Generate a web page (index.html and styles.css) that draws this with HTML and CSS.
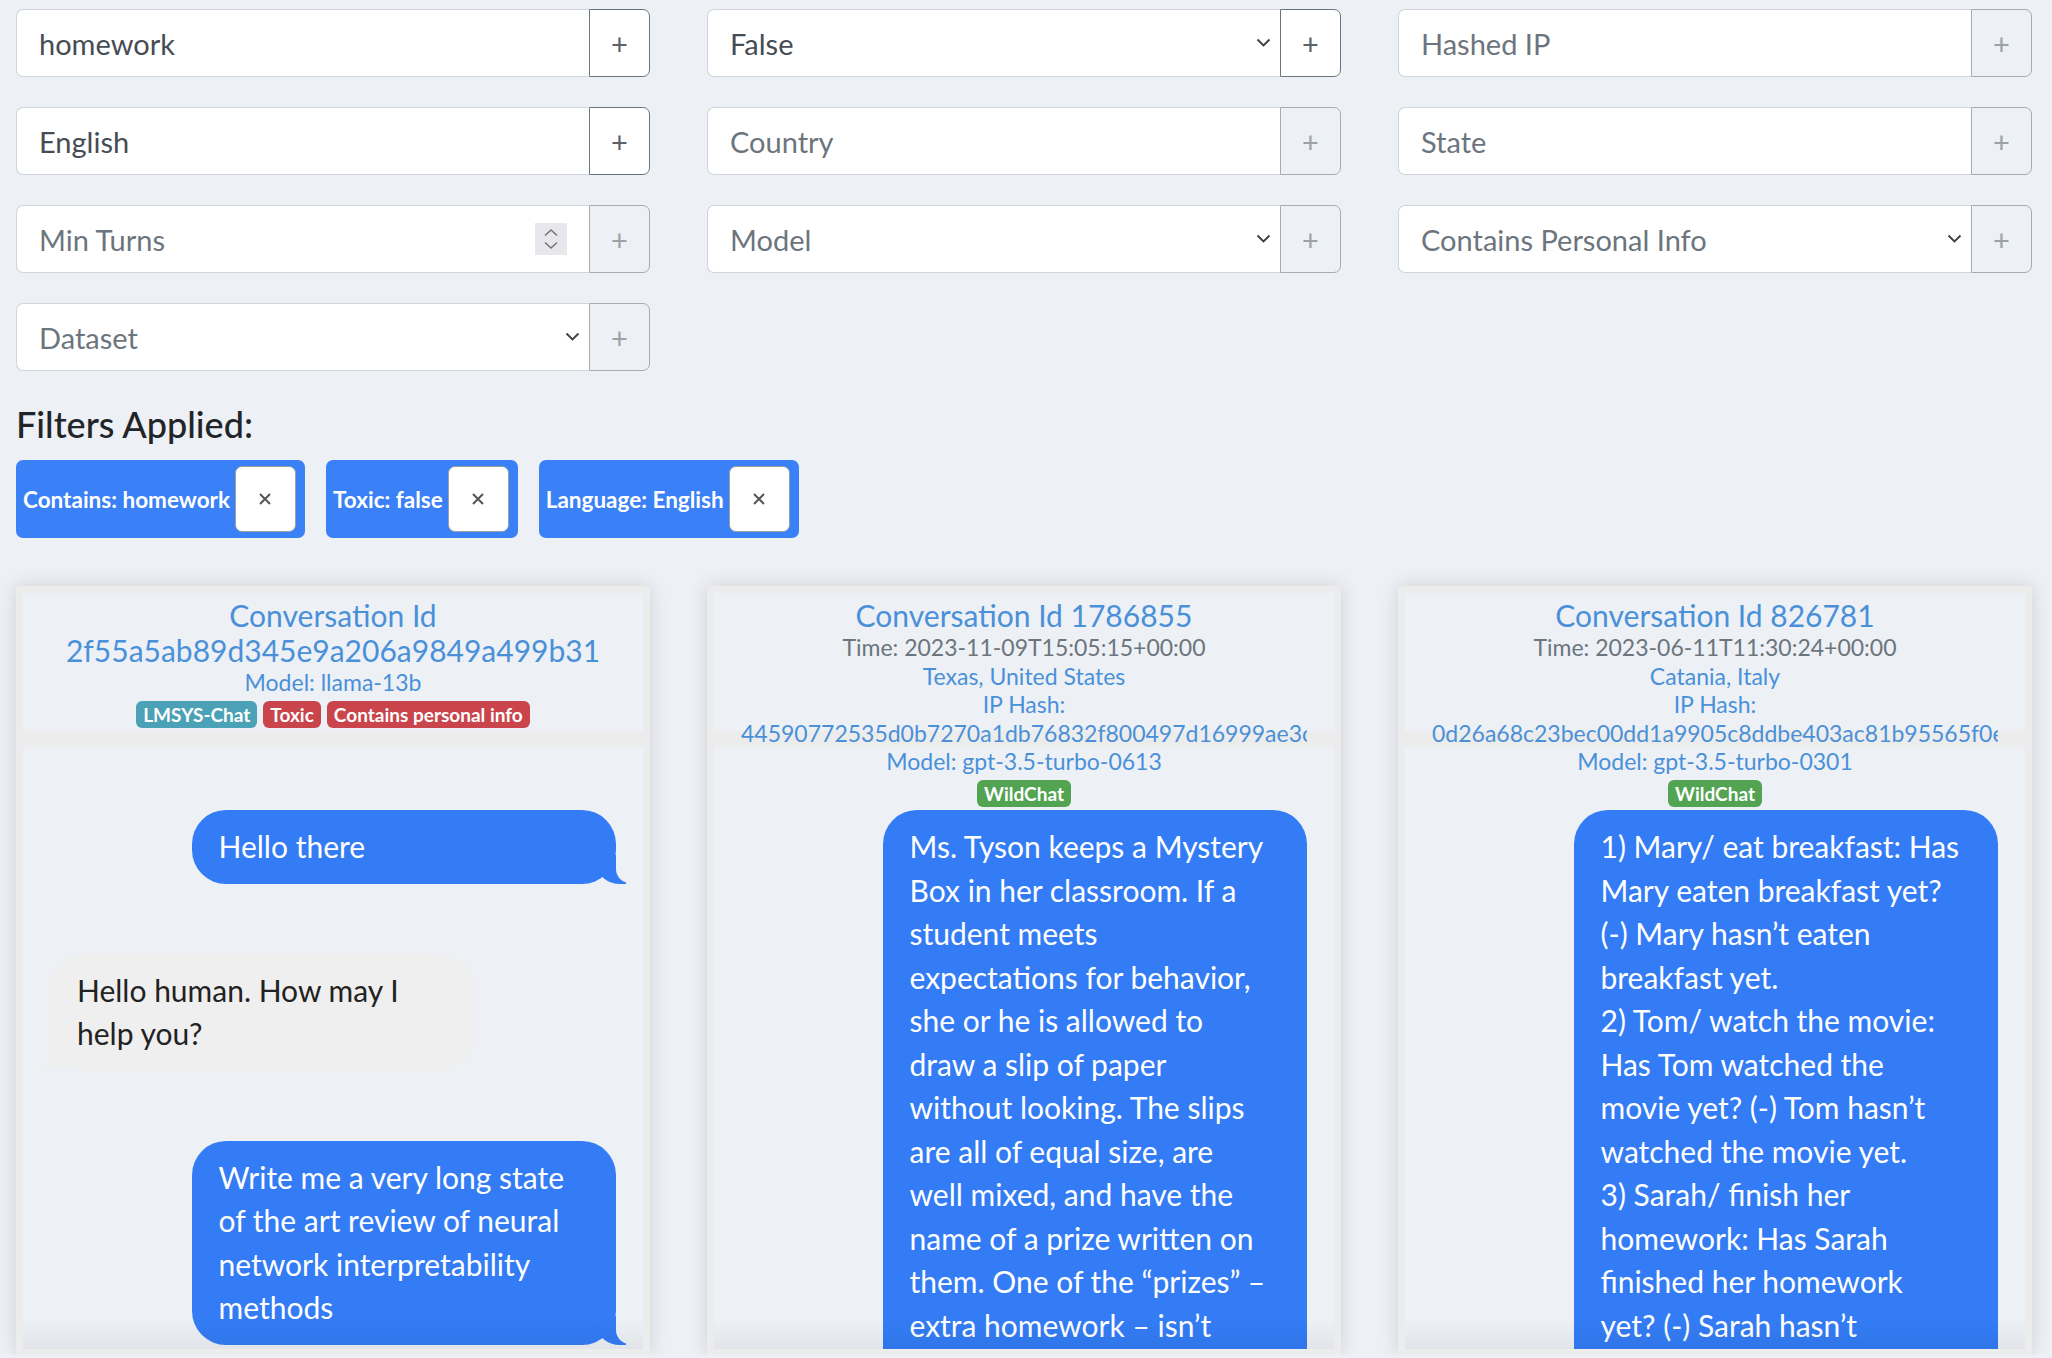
FILE: index.html
```html
<!DOCTYPE html>
<html lang="en">
<head>
  <meta charset="UTF-8">
  <meta name="viewport" content="width=device-width, initial-scale=1.0">
  <title>Conversation Browser</title>
  <link rel="stylesheet" href="styles.css">
</head>
<body>
  <div class="filters">
    <div class="input-group">
      <input class="field" type="text" value="homework" placeholder="Contains">
      <button class="add">+</button>
    </div>
    <div class="input-group">
      <select class="field"><option>False</option><option>True</option></select>
      <svg class="chevron" width="15" height="10" viewBox="0 0 15 10"><path d="M1.5 1.5l6 6 6-6" fill="none" stroke="#3a3f44" stroke-width="1.8"/></svg>
      <button class="add">+</button>
    </div>
    <div class="input-group">
      <input class="field" type="text" placeholder="Hashed IP">
      <button class="add" disabled>+</button>
    </div>

    <div class="input-group">
      <input class="field" type="text" value="English" placeholder="Language">
      <button class="add">+</button>
    </div>
    <div class="input-group">
      <input class="field" type="text" placeholder="Country">
      <button class="add" disabled>+</button>
    </div>
    <div class="input-group">
      <input class="field" type="text" placeholder="State">
      <button class="add" disabled>+</button>
    </div>

    <div class="input-group">
      <input class="field" type="number" placeholder="Min Turns">
      <span class="spinner">
        <svg width="32" height="32" viewBox="0 0 32 32"><path d="M10 12.5l6-5.5 6 5.5M10 19.5l6 5.5 6-5.5" fill="none" stroke="#70757b" stroke-width="1.5"/></svg>
      </span>
      <button class="add" disabled>+</button>
    </div>
    <div class="input-group">
      <select class="field empty"><option>Model</option></select>
      <svg class="chevron" width="15" height="10" viewBox="0 0 15 10"><path d="M1.5 1.5l6 6 6-6" fill="none" stroke="#3a3f44" stroke-width="1.8"/></svg>
      <button class="add" disabled>+</button>
    </div>
    <div class="input-group">
      <select class="field empty"><option>Contains Personal Info</option></select>
      <svg class="chevron" width="15" height="10" viewBox="0 0 15 10"><path d="M1.5 1.5l6 6 6-6" fill="none" stroke="#3a3f44" stroke-width="1.8"/></svg>
      <button class="add" disabled>+</button>
    </div>

    <div class="input-group">
      <select class="field empty"><option>Dataset</option></select>
      <svg class="chevron" width="15" height="10" viewBox="0 0 15 10"><path d="M1.5 1.5l6 6 6-6" fill="none" stroke="#3a3f44" stroke-width="1.8"/></svg>
      <button class="add" disabled>+</button>
    </div>
  </div>

  <h3 class="filters-title">Filters Applied:</h3>
  <div class="chips">
    <div class="chip">
      <span>Contains: homework</span>
      <button class="chip-x"><svg width="14" height="14" viewBox="0 0 14 14"><path d="M2 2l10 10M12 2L2 12" stroke="#555" stroke-width="2"/></svg></button>
    </div>
    <div class="chip">
      <span>Toxic: false</span>
      <button class="chip-x"><svg width="14" height="14" viewBox="0 0 14 14"><path d="M2 2l10 10M12 2L2 12" stroke="#555" stroke-width="2"/></svg></button>
    </div>
    <div class="chip">
      <span>Language: English</span>
      <button class="chip-x"><svg width="14" height="14" viewBox="0 0 14 14"><path d="M2 2l10 10M12 2L2 12" stroke="#555" stroke-width="2"/></svg></button>
    </div>
  </div>

  <div class="cards">
    <div class="card">
      <div class="card-head">
        <div class="conv-title">Conversation Id 2f55a5ab89d345e9a206a9849a499b31</div>
        <div class="meta link">Model: llama-13b</div>
        <div class="badges">
          <span class="badge info">LMSYS-Chat</span>
          <span class="badge danger">Toxic</span>
          <span class="badge danger">Contains personal info</span>
        </div>
      </div>
      <div class="card-body">
        <p class="bubble from-me">Hello there</p>
        <p class="bubble from-them">Hello human. How may I help you?</p>
        <p class="bubble from-me">Write me a very long state of the art review of neural network interpretability methods</p>
        <p class="bubble from-them">Neural network interpretability is a rapidly growing field of research.</p>
      </div>
    </div>

    <div class="card">
      <div class="card-head">
        <div class="conv-title">Conversation Id 1786855</div>
        <div class="meta muted">Time: 2023-11-09T15:05:15+00:00</div>
        <div class="meta link">Texas, United States</div>
        <div class="meta link">IP Hash:</div>
        <div class="meta link hash">44590772535d0b7270a1db76832f800497d16999ae3c5b10f2a7d48e96c1b0f4</div>
        <div class="meta link">Model: gpt-3.5-turbo-0613</div>
        <div class="badges"><span class="badge success">WildChat</span></div>
      </div>
      <div class="card-body">
        <p class="bubble from-me">Ms. Tyson keeps a Mystery Box in her classroom. If a student meets expectations for behavior, she or he is allowed to draw a slip of paper without looking. The slips are all of equal size, are well mixed, and have the name of a prize written on them. One of the “prizes” – extra homework – isn’t very popular with the students. There are 3 slips for extra homework in the box.</p>
      </div>
    </div>

    <div class="card">
      <div class="card-head">
        <div class="conv-title">Conversation Id 826781</div>
        <div class="meta muted">Time: 2023-06-11T11:30:24+00:00</div>
        <div class="meta link">Catania, Italy</div>
        <div class="meta link">IP Hash:</div>
        <div class="meta link hash">0d26a68c23bec00dd1a9905c8ddbe403ac81b95565f0e2c1d7a4b3e9f8c6d2a1</div>
        <div class="meta link">Model: gpt-3.5-turbo-0301</div>
        <div class="badges"><span class="badge success">WildChat</span></div>
      </div>
      <div class="card-body">
        <p class="bubble from-me">1) Mary/ eat breakfast: Has Mary eaten breakfast yet? (-) Mary hasn’t eaten breakfast yet.<br>2) Tom/ watch the movie: Has Tom watched the movie yet? (-) Tom hasn’t watched the movie yet.<br>3) Sarah/ finish her homework: Has Sarah finished her homework yet? (-) Sarah hasn’t finished her homework yet.</p>
      </div>
    </div>
  </div>
</body>
</html>
```

FILE: styles.css
```css
* {
  box-sizing: border-box;
}
body {
  margin: 0;
  padding: 9px 20px 0 16px;
  background-color: #edf0f4;
  font-family: Lato, "Noto Sans", sans-serif;
  color: #212529;
}

/* filter inputs */
.filters {
  display: grid;
  grid-template-columns: repeat(3, 634px);
  column-gap: 57px;
  row-gap: 30px;
}
.input-group {
  position: relative;
  display: flex;
  height: 68px;
}
.field {
  flex: 1;
  min-width: 0;
  height: 100%;
  padding: 0 22px;
  border: 1px solid #ced4da;
  border-right: none;
  border-radius: 7px 0 0 7px;
  background-color: #fff;
  font-family: Lato, sans-serif;
  font-size: 29px;
  color: #464c53;
  outline: none;
}
.field::placeholder {
  color: #6c757d;
}
select.field {
  appearance: none;
  -webkit-appearance: none;
}
select.empty {
  color: #6c757d;
}
input[type=number]::-webkit-inner-spin-button,
input[type=number]::-webkit-outer-spin-button {
  -webkit-appearance: none;
  margin: 0;
}
.chevron {
  position: absolute;
  right: 70px;
  top: 29px;
  pointer-events: none;
}
.spinner {
  position: absolute;
  right: 83px;
  top: 18px;
  width: 32px;
  height: 32px;
  background-color: #e7e7ec;
  pointer-events: none;
}
.spinner svg {
  display: block;
}
.add {
  flex: none;
  width: 61px;
  padding: 0;
  border: 1px solid #6c757d;
  border-radius: 0 7px 7px 0;
  background-color: #fff;
  font-family: Lato, sans-serif;
  font-size: 29px;
  color: #5c636a;
}
.add:disabled {
  background-color: transparent;
  opacity: 0.55;
}

/* applied filters */
.filters-title {
  margin: 32px 0 14px;
  font-size: 36px;
  font-weight: 500;
  line-height: 1.2;
}
.chips {
  display: flex;
  gap: 21px;
}
.chip {
  display: flex;
  align-items: center;
  gap: 5px;
  height: 78px;
  padding: 6px 9px 6px 7px;
  border-radius: 7px;
  background-color: #3a80f6;
  color: #fff;
  font-size: 22.5px;
  font-weight: 700;
}
.chip-x {
  display: flex;
  align-items: center;
  justify-content: center;
  width: 61px;
  height: 66px;
  padding: 0;
  border: 1px solid #9aa0a6;
  border-radius: 7px;
  background-color: #fff;
}

/* conversation cards */
.cards {
  display: grid;
  grid-template-columns: repeat(3, 634px);
  column-gap: 57px;
  margin-top: 48px;
}
.card {
  padding: 7px 7px 6px;
  background-color: #ececec;
  box-shadow: 0 0 18px rgba(0, 0, 0, 0.13);
}
.card-head {
  position: relative;
  z-index: 1;
  height: 138px;
  margin-bottom: 16px;
  padding: 5px 27px 0;
  background-color: #edf0f5;
  text-align: center;
}
.conv-title {
  font-size: 30px;
  line-height: 35px;
  color: #4a90d9;
}
.meta {
  font-size: 23px;
  line-height: 28.5px;
}
.link {
  color: #4a90d9;
}
.muted {
  color: #6c757d;
}
.hash {
  white-space: nowrap;
  overflow: hidden;
}
.badges {
  display: flex;
  justify-content: center;
  gap: 6px;
  margin-top: 4px;
}
.badge {
  padding: 0 7px;
  border-radius: 6px;
  font-size: 19px;
  font-weight: 700;
  line-height: 27px;
  color: #fff;
}
.badge.info {
  background-color: #4ba1b5;
}
.badge.danger {
  background-color: #ca444b;
}
.badge.success {
  background-color: #52a352;
}

.card-body {
  position: relative;
  display: flex;
  flex-direction: column;
  height: 602px;
  padding: 28px 27px;
  overflow: hidden;
  background-color: #edf0f5;
}
.card-body::after {
  content: "";
  position: absolute;
  left: 0;
  right: 0;
  bottom: 0;
  height: 30px;
  background: linear-gradient(rgba(0, 0, 0, 0), rgba(0, 0, 0, 0.05));
  pointer-events: none;
}
.bubble {
  position: relative;
  flex: none;
  width: 75%;
  margin: 35px 0;
  padding: 15px 37px 15px 27px;
  border-radius: 34px;
  font-size: 30px;
  line-height: 43.5px;
}
.bubble::before,
.bubble::after {
  content: "";
  position: absolute;
  bottom: -3px;
  height: 29px;
}
.from-me {
  align-self: flex-end;
  background-color: #337cf5;
  color: #fff;
}
.from-me::before {
  right: -10px;
  border-right: 29px solid #337cf5;
  border-bottom-left-radius: 23px 20px;
  transform: translate(0, -3px);
}
.from-me::after {
  right: -18px;
  width: 18px;
  background-color: #edf0f5;
  border-bottom-left-radius: 14px;
  transform: translate(0, -4px);
}
.from-them {
  align-self: flex-start;
  background-color: #efefef;
  color: #222;
}
.from-them::before {
  left: -10px;
  border-left: 29px solid #efefef;
  border-bottom-right-radius: 23px 20px;
  transform: translate(0, -3px);
}
.from-them::after {
  left: -18px;
  width: 18px;
  background-color: #edf0f5;
  border-bottom-right-radius: 14px;
  transform: translate(0, -4px);
}
```
